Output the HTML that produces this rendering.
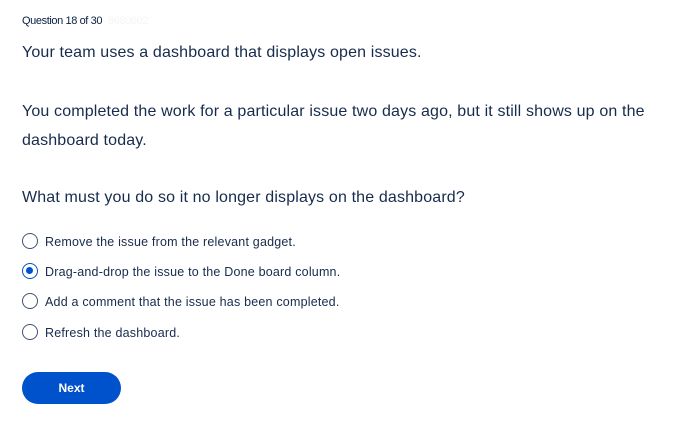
<!DOCTYPE html>
<html><head><style>
body{margin:0;width:676px;height:424px;background:#fff;font-family:"Liberation Sans",sans-serif;color:#172b4d;position:relative;overflow:hidden}
.a{position:absolute;white-space:nowrap}
.q{left:22px;top:15px;font-size:11px;letter-spacing:-0.4px;color:#091e42}
.q span{color:#f4f5f7;margin-left:6px}
.t{left:22px;font-size:16px;letter-spacing:0.15px;color:#172b4d}
.o{left:22px;font-size:12.5px;letter-spacing:0.2px;color:#172b4d;height:18px;line-height:18px}
.r{display:inline-block;width:16px;height:16px;border:1.4px solid #42526e;border-radius:50%;vertical-align:middle;margin-right:7px;margin-top:-3px;box-sizing:border-box;position:relative}
.r.s{border:1.8px solid #0052cc}
.r.s:after{content:"";position:absolute;left:2.6px;top:2.6px;width:7px;height:7px;border-radius:50%;background:#0052cc}
.b{left:22px;top:372px;width:99px;height:32px;border-radius:16px;background:#0052cc;color:#fff;font-weight:bold;font-size:12px;text-align:center;line-height:32px}
</style></head><body>
<div class="a q">Question 18 of 30<span>8680602</span></div>
<div class="a t" style="top:44px">Your team uses a dashboard that displays open issues.</div>
<div class="a t" style="top:103px">You completed the work for a particular issue two days ago, but it still shows up on the</div>
<div class="a t" style="top:132px">dashboard today.</div>
<div class="a t" style="top:189px">What must you do so it no longer displays on the dashboard?</div>
<div class="a o" style="top:233px"><span class="r"></span>Remove the issue from the relevant gadget.</div>
<div class="a o" style="top:263px"><span class="r s"></span>Drag-and-drop the issue to the Done board column.</div>
<div class="a o" style="top:293px"><span class="r"></span>Add a comment that the issue has been completed.</div>
<div class="a o" style="top:324px"><span class="r"></span>Refresh the dashboard.</div>
<div class="a b">Next</div>
</body></html>
